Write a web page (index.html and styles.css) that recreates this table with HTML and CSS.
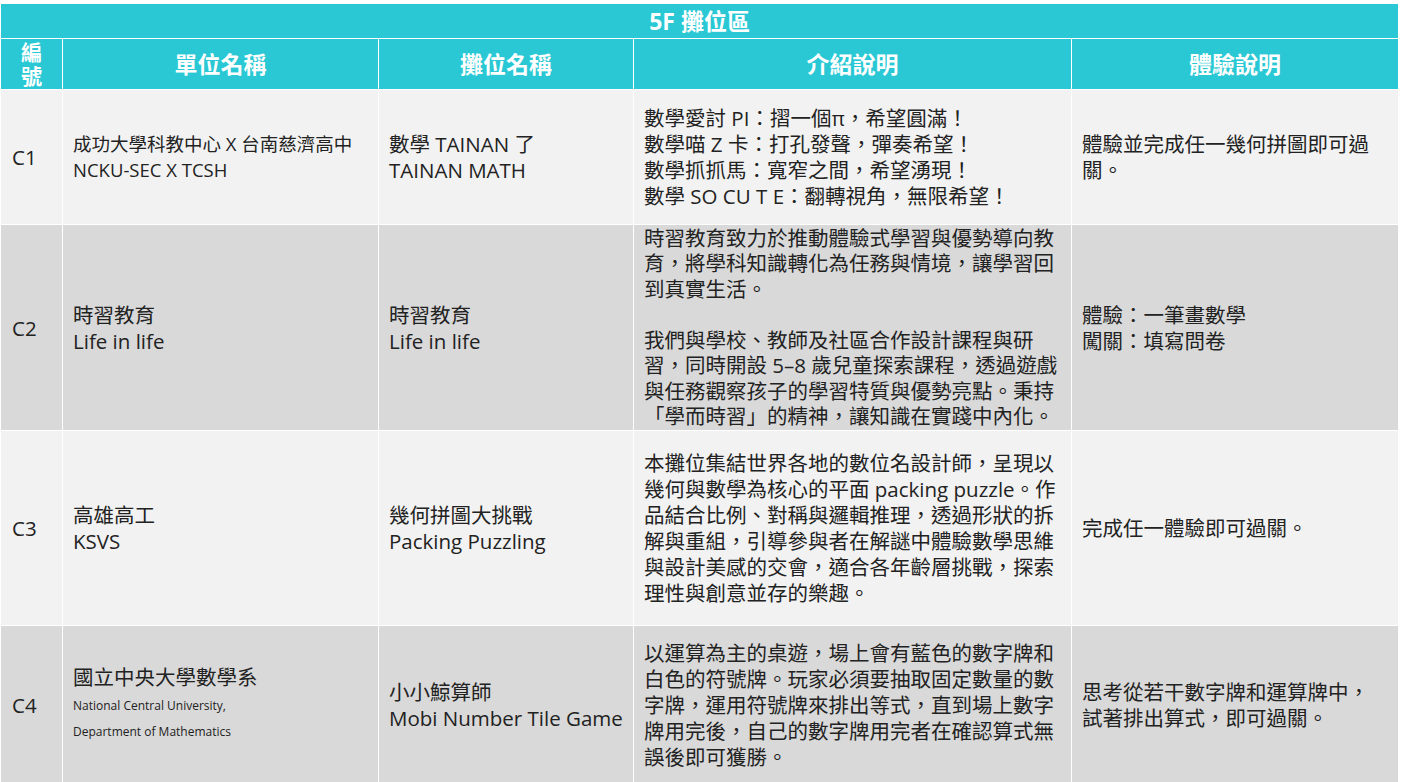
FILE: index.html
```html
<!DOCTYPE html>
<html lang="zh-Hant">
<head>
<meta charset="utf-8">
<title>5F 攤位區</title>
<link rel="stylesheet" href="styles.css">
</head>
<body>
<table class="booths">
  <colgroup>
    <col class="c-id">
    <col class="c-unit">
    <col class="c-booth">
    <col class="c-intro">
    <col class="c-exp">
  </colgroup>
  <thead>
    <tr class="r-title"><th colspan="5">5F 攤位區</th></tr>
    <tr class="r-head">
      <th class="h-id">編<br>號</th>
      <th>單位名稱</th>
      <th>攤位名稱</th>
      <th>介紹說明</th>
      <th>體驗說明</th>
    </tr>
  </thead>
  <tbody>
    <tr class="r-light r1">
      <td class="id">C1</td>
      <td class="small">成功大學科教中心 X 台南慈濟高中<br>NCKU-SEC X TCSH</td>
      <td>數學 TAINAN 了<br>TAINAN MATH</td>
      <td>數學愛討 PI：摺一個π，希望圓滿！<br>數學喵 Z 卡：打孔發聲，彈奏希望！<br>數學抓抓馬：寬窄之間，希望湧現！<br>數學 SO CU T E：翻轉視角，無限希望！</td>
      <td>體驗並完成任一幾何拼圖即可過<br>關。</td>
    </tr>
    <tr class="r-dark r2">
      <td class="id">C2</td>
      <td>時習教育<br>Life in life</td>
      <td>時習教育<br>Life in life</td>
      <td class="dense">時習教育致力於推動體驗式學習與優勢導向教<br>育，將學科知識轉化為任務與情境，讓學習回<br>到真實生活。<br><br>我們與學校、教師及社區合作設計課程與研<br>習，同時開設 5–8 歲兒童探索課程，透過遊戲<br>與任務觀察孩子的學習特質與優勢亮點。秉持<br>「學而時習」的精神，讓知識在實踐中內化。</td>
      <td>體驗：一筆畫數學<br>闖關：填寫問卷</td>
    </tr>
    <tr class="r-light r3">
      <td class="id">C3</td>
      <td>高雄高工<br>KSVS</td>
      <td>幾何拼圖大挑戰<br>Packing Puzzling</td>
      <td>本攤位集結世界各地的數位名設計師，呈現以<br>幾何與數學為核心的平面 packing puzzle。作<br>品結合比例、對稱與邏輯推理，透過形狀的拆<br>解與重組，引導參與者在解謎中體驗數學思維<br>與設計美感的交會，適合各年齡層挑戰，探索<br>理性與創意並存的樂趣。</td>
      <td>完成任一體驗即可過關。</td>
    </tr>
    <tr class="r-dark r4">
      <td class="id">C4</td>
      <td class="stack"><div class="zh">國立中央大學數學系</div><div class="tiny">National Central University,</div><div class="tiny">Department of Mathematics</div></td>
      <td>小小鯨算師<br>Mobi Number Tile Game</td>
      <td>以運算為主的桌遊，場上會有藍色的數字牌和<br>白色的符號牌。玩家必須要抽取固定數量的數<br>字牌，運用符號牌來排出等式，直到場上數字<br>牌用完後，自己的數字牌用完者在確認算式無<br>誤後即可獲勝。</td>
      <td>思考從若干數字牌和運算牌中，<br>試著排出算式，即可過關。</td>
    </tr>
  </tbody>
</table>
</body>
</html>
```

FILE: styles.css
```css
html, body {
  margin: 0;
  padding: 0;
  background: #ffffff;
}

body {
  font-family: "Open Sans", "Noto Sans CJK TC", sans-serif;
  color: #222222;
}

.booths {
  margin-top: 3px;
  width: 1398px;
  border-collapse: collapse;
  table-layout: fixed;
}

.c-id { width: 62px; }
.c-unit { width: 316px; }
.c-booth { width: 255px; }
.c-intro { width: 438px; }
.c-exp { width: 327px; }

.booths th,
.booths td {
  border: 1px solid #ffffff;
  padding: 0 10px;
}

.booths th {
  background: #29c8d4;
  color: #ffffff;
  font-weight: 700;
  font-size: 23px;
  text-align: center;
  vertical-align: middle;
}

.r-title { height: 35px; }
.r-title th { padding: 0; line-height: 30px; }

.r-head { height: 51px; }
.r-head th { line-height: 26px; }
.r-head .h-id { padding: 0; font-size: 21px; line-height: 24px; }

.booths td {
  font-size: 20.5px;
  line-height: 26px;
  vertical-align: middle;
  white-space: nowrap;
  text-align: left;
}

.booths td.dense { line-height: 25.5px; }

.r-light td { background: #f2f2f2; }
.r-dark td { background: #d9d9d9; }

.r1 { height: 135px; }
.r2 { height: 206px; }
.r3 { height: 195px; }
.r4 { height: 158px; }

.booths td.id { padding-left: 11px; }

.booths td.small { font-size: 18.5px; }

.booths td.stack { padding-bottom: 4px; }
.zh { line-height: 32px; }
.tiny { font-size: 12px; line-height: 26px; }
```
